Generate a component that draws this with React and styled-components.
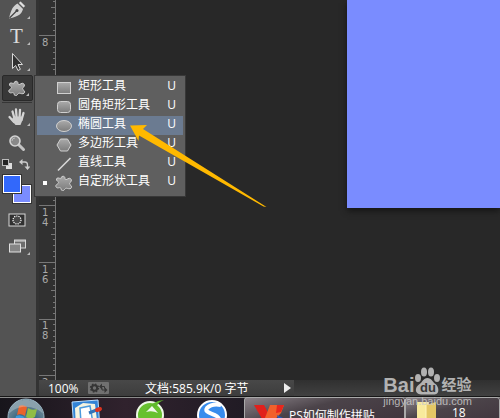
import React from 'react';
import styled, { createGlobalStyle, css } from 'styled-components';

const shapePath =
  'M7 1.5c2-.8 3 .4 3 2s1.600 1.300 3 .2c1.800-1.200 4 .3 3.300 2.300-.6 1.600-2 1.500-1.700 2.900.3 1.300 2.300 1.600 2 3.300-.4 1.900-2.600 1.700-4.200 1.200-1.800-.6-2.200.2-3 1.300-1.100 1.600-3.200 1.200-3.300-.6-.1-1.500-1-1.700-2.400-1.300C1.700 13.400.2 11.700 1 10.200c.7-1.200 2.500-1.400 2.600-2.700C3.700 6.200.9 6.100 1.500 4c.5-1.700 2.600-1 3.700-.4C6.400 4.200 5.700 2.100 7 1.500z';

const shapes = [
  { id: 'rect', label: '矩形工具' },
  { id: 'rounded', label: '圆角矩形工具' },
  { id: 'ellipse', label: '椭圆工具', active: true },
  { id: 'polygon', label: '多边形工具' },
  { id: 'line', label: '直线工具' },
  { id: 'custom', label: '自定形状工具', current: true },
];

const ShapeIcon = ({ id }) => (
  <svg width="18" height="16" viewBox="0 0 18 16">
    <g fill="url(#metal)" stroke="#d0d0d0" strokeWidth="1">
      {id === 'rect' && <rect x="2.500" y="2.500" width="13" height="11" />}
      {id === 'rounded' && (
        <rect x="2.500" y="2.500" width="13" height="11" rx="3" />
      )}
      {id === 'ellipse' && <ellipse cx="9" cy="8" rx="7.500" ry="5.500" />}
      {id === 'polygon' && <path d="M5.500 2h7l3.500 6-3.500 6h-7L2 8z" />}
      {id === 'line' && (
        <path d="M3 14.500 15.500 2" strokeWidth="1.600" stroke="#d8d8d8" />
      )}
      {id === 'custom' && <path d={shapePath} />}
    </g>
  </svg>
);

const PenIcon = () => (
  <svg width="20" height="20" viewBox="0 0 20 20">
    <path d="M13.500 1 18.500 6l-2 2-5-5z" fill="#e0e0e0" stroke="#333" strokeWidth=".5" />
    <path d="M10.500 3.500 16 9c-1 4.500-4 7.500-14 9.500C4 9.500 6 6 10.500 3.500z" fill="#d0d0d0" />
    <path d="M2.500 18 9.500 11" stroke="#444" strokeWidth="1.200" />
    <circle cx="10" cy="10.500" r="1.500" fill="#444" />
  </svg>
);

const ArrowIcon = () => (
  <svg width="20" height="20" viewBox="0 0 20 20">
    <path
      d="M5.500 1.500v15l3.200-3 2.300 5 2.400-1.200-2.400-4.800h4.500z"
      fill="#303030"
      stroke="#d8d8d8"
    />
  </svg>
);

const HandIcon = () => (
  <svg width="20" height="20" viewBox="0 0 20 20">
    <g fill="none" stroke="#d6d6d6" strokeWidth="2.300" strokeLinecap="round">
      <path d="M5.500 4.500l2 7M9 2.500l.6 8M13 2.800 12.500 11M16.500 6l-2 7M2.500 10 7 15" />
    </g>
    <path d="M6.500 9.500 15.500 9.500 15.500 13 13.500 18H8.500L4.500 13z" fill="#cfcfcf" />
  </svg>
);

const ZoomIcon = () => (
  <svg width="20" height="20" viewBox="0 0 20 20">
    <path d="M11 11 16.500 16.500" stroke="#c4c4c4" strokeWidth="3" strokeLinecap="round" />
    <circle cx="8" cy="8" r="5" fill="#898989" stroke="#d4d4d4" strokeWidth="1.600" />
    <path d="M5 8a3 3 0 0 1 3-3" fill="none" stroke="#bbb" />
  </svg>
);

const MaskIcon = () => (
  <svg width="18" height="16" viewBox="0 0 18 16">
    <rect x="1" y="2" width="16" height="12" fill="#303030" stroke="#d8d8d8" />
    <circle cx="9" cy="8" r="4" fill="#484848" stroke="#fff" strokeWidth="1.200" strokeDasharray="1.200 1" />
  </svg>
);

const ScreenIcon = () => (
  <svg width="18" height="16" viewBox="0 0 18 16">
    <rect x="6.500" y="2" width="11" height="8" fill="#6c6c6c" stroke="#d4d4d4" />
    <path d="M6 3h12" stroke="#ddd" />
    <rect x="1.500" y="6" width="11" height="8" fill="#858585" stroke="#e0e0e0" />
  </svg>
);

const TypeIcon = () => <TypeGlyph>T</TypeGlyph>;

// distance between two small marks, ten of them per numbered one
const UNIT = 17 / 3;
const ticks = Array.from({ length: 80 }, (_, i) => ({
  y: Math.round(35.4 + (i - 6) * UNIT),
  length: i % 10 === 6 ? 17 : i % 5 === 1 ? 5 : 3,
}));
const numbers = [
  { y: 35, digits: ['8'] },
  { y: 92, digits: ['1', '0'] },
  { y: 148, digits: ['1', '2'] },
  { y: 205, digits: ['1', '4'] },
  { y: 262, digits: ['1', '6'] },
  { y: 318, digits: ['1', '8'] },
  { y: 375, digits: ['2', '0'] },
];

const Ruler = () => (
  <RulerColumn>
    <svg width="17" height="100%">
      {ticks.map(({ y, length }) => (
        <rect key={y} x={17 - length} y={y} width={length} height="1" fill="#777" />
      ))}
      <rect x="16" width="1" height="100%" fill="#777" />
      {numbers.map(({ y, digits }) =>
        digits.map((digit, i) => (
          <text key={`${y}-${i}`} x="3" y={y + 11 + i * 10}>
            {digit}
          </text>
        ))
      )}
    </svg>
  </RulerColumn>
);

const Tool = ({ label, icon, selected, flyout }) => (
  <ToolButton type="button" aria-label={label} $selected={selected}>
    {icon}
    {flyout && <Corner />}
  </ToolButton>
);

const Toolbar = () => (
  <ToolColumn>
    <ToolList>
      <Tool label="钢笔工具" icon={<PenIcon />} flyout />
      <Tool label="文字工具" icon={<TypeIcon />} flyout />
      <Tool label="选择工具" icon={<ArrowIcon />} flyout />
      <Tool label="形状工具" icon={<ShapeIcon id="custom" />} selected flyout />
      <Divider />
      <Tool label="抓手工具" icon={<HandIcon />} flyout />
      <Tool label="缩放工具" icon={<ZoomIcon />} />
      <ColorActions>
        <PlainButton type="button" aria-label="默认颜色">
          <svg width="11" height="11" viewBox="0 0 11 11">
            <rect x="4" y="4" width="6" height="6" fill="#ddd" />
            <rect x=".5" y=".5" width="6" height="6" fill="#222" stroke="#bbb" />
          </svg>
        </PlainButton>
        <PlainButton type="button" aria-label="切换颜色">
          <svg width="11" height="11" viewBox="0 0 11 11">
            <path d="M2 3h4q2.500 0 2.500 3v2" fill="none" stroke="#ccc" strokeWidth="1.300" />
            <path d="M0 3 3.500 0v6zM8.500 11 5.500 7.500h6z" fill="#ccc" />
          </svg>
        </PlainButton>
      </ColorActions>
      <Swatches>
        <Swatch type="button" aria-label="前景色" $color="#3268fb" $front />
        <Swatch type="button" aria-label="背景色" $color="#7a8cff" />
      </Swatches>
      <Tool label="快速蒙版" icon={<MaskIcon />} />
      <Tool label="屏幕模式" icon={<ScreenIcon />} flyout />
    </ToolList>
  </ToolColumn>
);

const ShapeMenu = () => (
  <Menu role="menu">
    {shapes.map(({ id, label, active, current }) => (
      <MenuItem key={id} type="button" role="menuitem" $active={active}>
        <Marker $on={current} />
        <ShapeIcon id={id} />
        <span>{label}</span>
        <Shortcut>U</Shortcut>
      </MenuItem>
    ))}
  </Menu>
);

const StatusBar = () => (
  <StatusStrip>
    <StatusPanel>
      <ZoomLevel>100%</ZoomLevel>
      <PlainButton type="button" aria-label="同步设置">
        <svg width="21" height="12" viewBox="0 0 21 12">
          <rect width="21" height="12" rx="1" fill="#707070" />
          <circle cx="6.500" cy="6" r="2.700" fill="none" stroke="#353535" strokeWidth="2" />
          <circle cx="6.500" cy="6" r="4" fill="none" stroke="#353535" strokeWidth="1.300" strokeDasharray="1.600 1.540" />
          <path d="M11 4.500 14 1.500v6zM19.500 8 16.500 5v6z" fill="#353535" />
          <path d="M13 4.500h3.500v2M14 5.500v2.500h3.500" fill="none" stroke="#353535" />
        </svg>
      </PlainButton>
      <DocSize>文档:585.9K/0 字节</DocSize>
      <PlainButton type="button" aria-label="状态选项">
        <svg width="7" height="10" viewBox="0 0 7 10">
          <path d="M0 0 7 5 0 10z" fill="#eee" />
        </svg>
      </PlainButton>
    </StatusPanel>
  </StatusStrip>
);

const Taskbar = () => (
  <TaskStrip>
    <Launchers>
      <PlainButton type="button" aria-label="开始">
        <svg width="38" height="38" viewBox="0 0 38 38">
          <circle cx="19" cy="19" r="18" fill="url(#orb)" stroke="#9bb6c4" />
          <path d="M12 8q4-2 8 1l-2 9q-4-3-8-1z" fill="#e9632c" />
          <path d="M21 10q4 3 9 1l-2 8q-5 3-9 0z" fill="#91bd45" />
          <path d="M9 18q4-2 8 1l-2 8q-4-3-8-1z" fill="#3e9bdf" />
          <path d="M18 20q4 3 9 1l-2 8q-5 2-9-1z" fill="#f5c63a" />
          <path d="M2 16C5 3 13 2 19 2s14 1 17 14C30 8 11 5 2 16z" fill="#fff" opacity=".28" />
        </svg>
      </PlainButton>
      <PlainButton type="button" aria-label="便笺">
        <svg width="32" height="34" viewBox="0 0 32 34">
          <path d="M1 4 27 2l2 30H3z" fill="#3283d6" stroke="#b8ddff" />
          <path d="M4 10 12 5l12 1 3 25H5z" fill="#f4f3df" />
          <path d="M9 10 19 8l3 17H10z" fill="#fff" stroke="#4a9ade" strokeWidth="1.500" />
          <path d="M18 15 28 11" stroke="#3274ba" strokeWidth="3" />
          <path d="M26 12 29 11" stroke="#db3320" strokeWidth="4" strokeLinecap="round" />
        </svg>
      </PlainButton>
      <PlainButton type="button" aria-label="浏览器">
        <svg width="30" height="34" viewBox="0 0 30 34">
          <circle cx="15" cy="17" r="13" fill="#68c12f" stroke="#eef9e6" strokeWidth="2" />
          <path d="M10 13Q17 3 29 2 23 4 22 8l-4 3z" fill="#5fb92c" />
          <path d="M11 14 17 8l6 7q-6-3-12-1z" fill="#f2f8ed" />
        </svg>
      </PlainButton>
      <PlainButton type="button" aria-label="搜狗">
        <svg width="32" height="34" viewBox="0 0 32 34">
          <circle cx="16" cy="17" r="14" fill="#388ced" stroke="#fff" strokeWidth="2" />
          <path d="M25 7q-9-2-14 3c-4 6 11 5 12 11 0 5-8 5-14 2" fill="none" stroke="#fff" strokeWidth="4" />
        </svg>
      </PlainButton>
    </Launchers>
    <TaskButton type="button" $wide>
      <svg width="32" height="28" viewBox="0 0 32 28">
        <path d="M1 0h10l7 13-6 6z" fill="#e1201c" />
        <path d="M17 0h14l-3 8-14 15-4-5z" fill="#f1602b" />
        <path d="M24 0h7l-3 7-5 1z" fill="#e8261d" />
        <path d="M24 10 30 13l-4 4z" fill="#235ac0" />
      </svg>
      <span>PS如何制作拼贴</span>
    </TaskButton>
    <TaskButton type="button">
      <svg width="22" height="28" viewBox="0 0 22 28">
        <path d="M1 0h12v26L1 24z" fill="#f8ea9c" />
        <path d="M10 3 20 0v24l-10 3z" fill="#e4c765" />
        <path d="M10 3v24" stroke="#fff5bd" />
      </svg>
      <span>18</span>
    </TaskButton>
  </TaskStrip>
);

const Watermark = () => (
  <Mark>
    <MarkRow>
      <span>Bai</span>
      <svg width="27" height="28" viewBox="0 0 27 28">
        <g fill="#c9c9c9">
          <ellipse cx="4" cy="11" rx="3" ry="4" />
          <ellipse cx="10" cy="5" rx="3" ry="4.500" />
          <ellipse cx="17" cy="5" rx="3" ry="4.500" />
          <ellipse cx="23" cy="11" rx="3" ry="4" />
          <path d="M13.500 11c4 0 5 4 8 6s5 10-1 10.500H7C0 27 1 20 5 17.500 9 15 9 11 13.500 11z" />
        </g>
        <text x="6" y="25">du</text>
      </svg>
      <MarkChinese>经验</MarkChinese>
    </MarkRow>
    <MarkUrl>jingyan.baidu.com</MarkUrl>
  </Mark>
);

const Gradients = () => (
  <Defs aria-hidden="true">
    <defs>
      <linearGradient id="metal" x2="0" y2="1">
        <stop stopColor="#aaa" />
        <stop offset="1" stopColor="#7c7c7c" />
      </linearGradient>
      <radialGradient id="orb" cy=".7">
        <stop stopColor="#66b2d4" />
        <stop offset=".6" stopColor="#356783" />
        <stop offset="1" stopColor="#5e7d8e" />
      </radialGradient>
    </defs>
  </Defs>
);

const App = () => {
  return (
    <Window>
      <GlobalStyle />
      <Gradients />
      <Editor>
        <Toolbar />
        <Workspace>
          <DocumentRow>
            <Ruler />
            <Stage>
              <Canvas />
            </Stage>
          </DocumentRow>
          <StatusBar />
        </Workspace>
      </Editor>
      <Taskbar />
      <ShapeMenu />
      <Pointer width="140" height="86" viewBox="0 0 140 86">
        <path d="M1 1.500 18 1 14 5 137.500 83 134.500 82.500 10 11.500 9.500 17z" fill="#ffb900" />
      </Pointer>
      <Watermark />
    </Window>
  );
};

const GlobalStyle = createGlobalStyle`
  * {
    box-sizing: border-box;
  }
  body {
    margin: 0;
    background: #282828;
    color: #fff;
    font-family: 'Open Sans', 'Noto Sans CJK SC', sans-serif;
    font-size: 12px;
  }
  button {
    margin: 0;
    padding: 0;
    border: 0;
    background: none;
    color: inherit;
    font: inherit;
  }
  svg {
    display: block;
    flex: none;
  }
`;

const Defs = styled.svg`
  position: absolute;
  width: 0;
  height: 0;
`;

const Window = styled.div`
  position: relative;
  display: flex;
  flex-direction: column;
  height: 100vh;
  overflow: hidden;
`;

const Editor = styled.main`
  display: flex;
  flex: 1;
  min-height: 0;
`;

const ToolColumn = styled.aside`
  flex: none;
  width: 39px;
  overflow: hidden;
  background: #535353;
  border-right: 3px solid #333;
`;

const ToolList = styled.div`
  display: flex;
  flex-direction: column;
  align-items: flex-start;
  margin-top: -3px;
`;

const ToolButton = styled.button`
  position: relative;
  display: flex;
  align-items: center;
  justify-content: center;
  width: 31px;
  height: 26px;
  margin-left: 2px;
  padding-right: 2px;
  ${({ $selected }) =>
    $selected &&
    css`
      background: #383838;
      border: 1px solid #292929;
      border-radius: 2px;
    `}
`;

const Corner = styled.i`
  position: absolute;
  right: 3px;
  bottom: 4px;
  border-left: 3px solid transparent;
  border-bottom: 3px solid #bbb;
`;

const TypeGlyph = styled.span`
  color: #dcdcdc;
  font-family: 'Liberation Serif', serif;
  font-size: 21px;
  line-height: 26px;
`;

const Divider = styled.hr`
  width: 30px;
  height: 1px;
  margin: 1px 2px;
  border: 0;
  background: #363636;
`;

const ColorActions = styled.div`
  display: flex;
  justify-content: space-between;
  width: 31px;
  height: 19px;
  padding: 3px 1px 0 2px;
`;

const PlainButton = styled.button`
  display: flex;
  align-items: flex-start;
`;

const Swatches = styled.div`
  display: grid;
  grid-template-columns: 10px 8px 10px;
  grid-template-rows: 10px 8px 10px;
  margin: 0 0 4px 3px;
`;

const Swatch = styled.button`
  grid-area: ${({ $front }) => ($front ? '1 / 1 / 3 / 3' : '2 / 2 / 4 / 4')};
  z-index: ${({ $front }) => ($front ? 1 : 0)};
  background: ${({ $color }) => $color};
  border: 1px solid #fff;
  outline: 1px solid #333;
  outline-offset: 0;
`;

const Workspace = styled.section`
  display: flex;
  flex: 1;
  flex-direction: column;
  min-width: 0;
`;

const DocumentRow = styled.div`
  display: flex;
  flex: 1;
  min-height: 0;
`;

const RulerColumn = styled.div`
  flex: none;
  width: 17px;
  overflow: hidden;
  background: #303030;
  text {
    fill: #aaa;
    font-family: 'DejaVu Sans', sans-serif;
    font-size: 10px;
  }
`;

const Stage = styled.div`
  display: flex;
  flex: 1;
  align-items: flex-start;
  justify-content: flex-end;
  background: #282828;
`;

const Canvas = styled.div`
  width: calc(100% - 291px);
  height: 208px;
  background: #7a8cff;
  box-shadow: 0 3px 6px #151515;
`;

const Menu = styled.div`
  position: absolute;
  left: 34px;
  top: 75px;
  width: 152px;
  padding: 2px 2px 4px;
  background: #5f5f5f;
  border: 1px solid #383838;
`;

const MenuItem = styled.button`
  display: flex;
  align-items: center;
  width: 100%;
  height: 19px;
  padding: 0 7px 0 6px;
  line-height: 15px;
  background: ${({ $active }) => ($active ? '#6b7b91' : 'transparent')};
  svg {
    margin: 0 5px 0 8px;
  }
  span {
    padding-bottom: 4px;
  }
`;

const Marker = styled.i`
  width: 4px;
  height: 4px;
  background: ${({ $on }) => ($on ? '#fff' : 'transparent')};
`;

const Shortcut = styled.span`
  margin-left: auto;
`;

const StatusStrip = styled.footer`
  flex: none;
  height: 16px;
  background: linear-gradient(#303030, #414141);
`;

const StatusPanel = styled.div`
  display: flex;
  align-items: center;
  width: 255px;
  height: 16px;
  padding: 0 3px 0 9px;
  background: linear-gradient(#484848, #3d3d3d);
`;

const ZoomLevel = styled.span`
  width: 40px;
`;

const DocSize = styled.span`
  margin: 0 auto 0 36px;
  white-space: nowrap;
`;

const TaskStrip = styled.nav`
  display: flex;
  flex: none;
  align-items: flex-start;
  height: 22px;
  overflow: hidden;
  background: linear-gradient(90deg, #17151b, #30222d 25%, #201b24 50%, #342530);
  border-top: 1px solid #171717;
  box-shadow: inset 0 1px #8b8b8b;
`;

const Launchers = styled.div`
  display: grid;
  flex: none;
  grid-template-columns: 64px 64px 61px 32px;
  width: 244px;
  padding: 1px 0 0 7px;
`;

const TaskButton = styled.button`
  display: flex;
  flex: ${({ $wide }) => ($wide ? '0 0 161px' : '1')};
  align-items: flex-start;
  gap: 4px;
  height: 38px;
  padding: 7px 8px;
  border: 1px solid #aaa;
  border-radius: 3px;
  background: linear-gradient(165deg, #8b8389, #4b4349 35%, #3c3039);
  white-space: nowrap;
  span {
    padding-top: 2px;
    line-height: 17px;
  }
  & + & {
    gap: 14px;
    padding: 4px 10px;
    span {
      padding-top: 5px;
    }
  }
`;

const Pointer = styled.svg`
  position: absolute;
  left: 129px;
  top: 124px;
`;

const Mark = styled.div`
  position: absolute;
  right: 28px;
  bottom: 11px;
  color: #c9c9c9;
  font-family: 'Liberation Sans', 'Noto Sans CJK SC', sans-serif;
  font-weight: bold;
  opacity: 0.85;
`;

const MarkRow = styled.div`
  display: flex;
  align-items: flex-end;
  font-size: 20px;
  line-height: 20px;
  text {
    fill: #383838;
    font-size: 13px;
  }
`;

const MarkChinese = styled.span`
  font-size: 15px;
`;

const MarkUrl = styled.div`
  font-size: 11px;
  font-weight: normal;
  line-height: 12px;
`;

export default App;
